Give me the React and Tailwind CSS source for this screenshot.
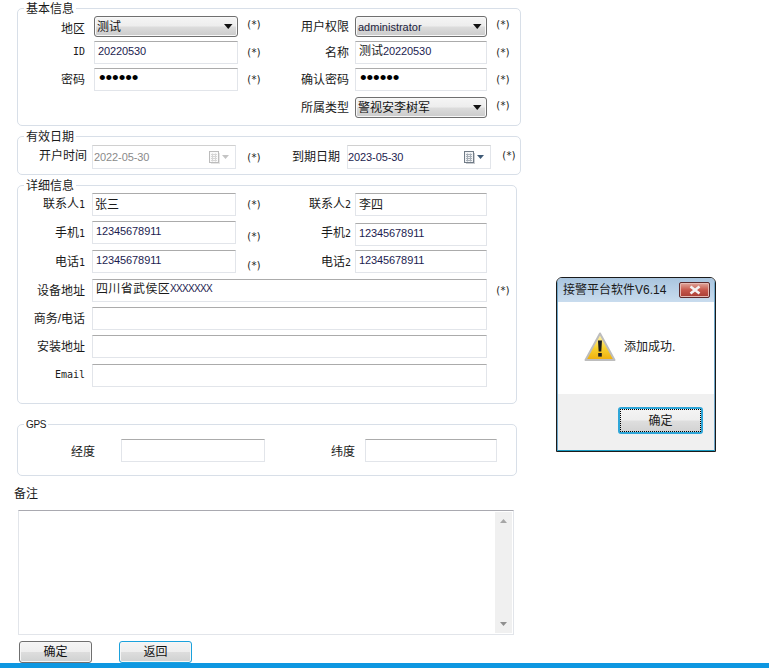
function Req({ cls = "" }) {
  return <span className={"w-[14px] shrink-0 whitespace-nowrap text-center font-['DejaVu_Sans_Mono',monospace] text-[10px] leading-[12px] tracking-[-1.1px] text-[#222] " + cls}>(*)</span>;
}
function Lbl({ w, cls = "", children }) {
  return <span className={"shrink-0 text-right text-[12px] leading-[14px] text-[#1a1a1a] " + w + " " + cls}>{children}</span>;
}
function M({ children }) {
  return <span className="font-['DejaVu_Sans_Mono',monospace] text-[10px]">{children}</span>;
}
function Box({ w, mt = "", cjk, children }) {
  return (
    <div className={"h-[23px] shrink-0 flex items-center border border-[#e2e5ea] border-t-[#ababab] bg-white pl-[3px] pr-[2px] pb-[3px] leading-[14px] text-[#1a1a1a] " + w + " " + mt + " " + (cjk ? "text-[12px]" : "text-[11px] tracking-[-0.1px] text-[#1c1c50]")}>
      {children}
    </div>
  );
}
function Dots() {
  return <span className="pl-[1px] font-['Liberation_Sans',sans-serif] text-[19px] leading-[14px] text-black">••••••</span>;
}
function Sel({ w, cjk, children }) {
  return (
    <div className={"h-[21px] shrink-0 flex items-center justify-between rounded-[3px] border border-[#6f6f6f] bg-[linear-gradient(#f5f5f5_0%,#ededed_48%,#dcdcdc_52%,#cbcbcb_100%)] pl-[2px] pr-[4px] leading-[14px] shadow-[inset_0_0_0_1px_#f8f8f8] " + w + " " + (cjk ? "text-[12px] text-[#111]" : "text-[11px] text-[#1c1c3c]")}>
      <span>{children}</span>
      <svg width="9" height="5" viewBox="0 0 9 5"><path d="M0 0h8.5L4.25 5z" fill="#111" /></svg>
    </div>
  );
}
function Cal({ dim }) {
  const c = dim ? "#bcbcbc" : "#717c87";
  return (
    <svg width="20" height="13" viewBox="0 0 20 13" className="shrink-0">
      <rect x="2" y="2" width="9" height="11" fill={dim ? "#e6e6e6" : "#c9ccd0"} />
      <rect x="0.5" y="0.5" width="9" height="11" fill={dim ? "#fafafa" : "#f2f3f5"} stroke={c} />
      <path d="M2 3.5h6M2 5.5h6M2 7.5h6M2 9.5h6" stroke={dim ? "#d6d6d6" : "#a7afb7"} strokeWidth="1" />
      <path d="M3.5 2.5v8M6.5 2.5v8" stroke={dim ? "#d6d6d6" : "#a7afb7"} strokeWidth="1" />
      <path d="M13 4h7l-3.5 4z" fill={dim ? "#c4c4c4" : "#3f5a76"} />
    </svg>
  );
}
function DateBox({ dim, children }) {
  return (
    <div className={"h-[24px] w-[144px] shrink-0 flex items-center justify-between border border-[#e2e5ea] border-t-[#d0d0d0] pr-[6px] text-[11px] tracking-[-0.1px] " + (dim ? "pl-[1px] text-[#8a8a8a]" : "text-[#1c1c50]")}>
      <span>{children}</span>
      <Cal dim={dim} />
    </div>
  );
}
function Legend({ children }) {
  return <span className="absolute left-[6px] -top-[7px] bg-white px-[2px] text-[12px] leading-[14px] text-[#1a1a1a]">{children}</span>;
}
function Btn({ blue, children }) {
  return (
    <div className={"h-[22px] w-[73px] flex items-center justify-center rounded-[3px] border bg-[linear-gradient(#f4f4f4_0%,#eeeeee_48%,#dddddd_52%,#cfd1d1_100%)] text-[12px] text-[#111] shadow-[inset_0_0_0_1px_#f6f6f6] " + (blue ? "border-[#1ba1dc]" : "border-[#6f6f6f]")}>
      {children}
    </div>
  );
}

export default function App() {
  return (
    <div className="relative flex h-[668px] w-[769px] flex-col overflow-hidden bg-white font-['Liberation_Sans','Noto_Sans_CJK_SC',sans-serif]">
      <div className="flex flex-1 flex-col pl-[17px]">
        {/* 基本信息 */}
        <section className="relative mt-[8px] h-[118px] w-[504px] rounded-[5px] border border-[#d8dfe8] pt-[7px]">
          <Legend>基本信息</Legend>
          <div className="flex items-center">
            <Lbl w="w-[67px]" cls="mr-[9px] pt-[4px]">地区</Lbl>
            <Sel w="w-[144px]" cjk>测试</Sel>
            <Req cls="ml-[8px] mb-[4px]" />
            <Lbl w="w-[89px]" cls="mr-[6px]">用户权限</Lbl>
            <Sel w="w-[132px]">administrator</Sel>
            <Req cls="ml-[8px] mb-[4px]" />
          </div>
          <div className="mt-[4px] flex items-center">
            <Lbl w="w-[67px]" cls="mr-[9px] pb-[2px]"><M>ID</M></Lbl>
            <Box w="w-[144px]">20220530</Box>
            <Req cls="ml-[8px]" />
            <Lbl w="w-[89px]" cls="mr-[6px]">名称</Lbl>
            <Box w="w-[132px]" cjk>测试<span className="text-[11px] tracking-[-0.1px] text-[#1c1c50]">20220530</span></Box>
            <Req cls="ml-[8px]" />
          </div>
          <div className="mt-[4px] flex items-center">
            <Lbl w="w-[67px]" cls="mr-[9px]">密码</Lbl>
            <Box w="w-[144px]"><Dots /></Box>
            <Req cls="ml-[8px]" />
            <Lbl w="w-[89px]" cls="mr-[6px]">确认密码</Lbl>
            <Box w="w-[132px]"><Dots /></Box>
            <Req cls="ml-[8px]" />
          </div>
          <div className="mt-[6px] flex items-center pl-[242px]">
            <Lbl w="w-[89px]" cls="mr-[6px]">所属类型</Lbl>
            <Sel w="w-[132px]" cjk>警视安李树军</Sel>
            <Req cls="ml-[8px] mb-[4px]" />
          </div>
        </section>

        {/* 有效日期 */}
        <section className="relative mt-[10px] h-[39px] w-[504px] rounded-[5px] border border-[#d8dfe8] pt-[8px]">
          <Legend>有效日期</Legend>
          <div className="flex items-center">
            <Lbl w="w-[69px]" cls="mr-[5px] pb-[2px]">开户时间</Lbl>
            <DateBox dim>2022-05-30</DateBox>
            <Req cls="ml-[10px] pt-[2px]" />
            <Lbl w="w-[80px]" cls="mr-[7px]">到期日期</Lbl>
            <DateBox>2023-05-30</DateBox>
            <Req cls="ml-[10px] mb-[2px]" />
          </div>
        </section>

        {/* 详细信息 */}
        <section className="relative mt-[10px] h-[219px] w-[500px] rounded-[5px] border border-[#d8dfe8] pt-[7px]">
          <Legend>详细信息</Legend>
          <div className="flex items-center">
            <Lbl w="w-[67px]" cls="mr-[7px]">联系人<M>1</M></Lbl>
            <Box w="w-[144px]" cjk><span className="-ml-[1px] mt-[4px]">张三</span></Box>
            <Req cls="ml-[10px]" />
            <Lbl w="w-[91px]" cls="mr-[4px]">联系人<M>2</M></Lbl>
            <Box w="w-[132px]" cjk><span className="mt-[4px]">李四</span></Box>
          </div>
          <div className="mt-[5px] flex items-start">
            <Lbl w="w-[67px]" cls="mr-[7px] mt-[5px]">手机<M>1</M></Lbl>
            <Box w="w-[144px]">12345678911</Box>
            <Req cls="ml-[10px] mt-[10px]" />
            <Lbl w="w-[91px]" cls="mr-[4px] mt-[5px]">手机<M>2</M></Lbl>
            <Box w="w-[132px]" mt="mt-[2px]">12345678911</Box>
          </div>
          <div className="mt-[4px] flex items-start">
            <Lbl w="w-[67px]" cls="mr-[7px] mt-[5px]">电话<M>1</M></Lbl>
            <Box w="w-[144px]">12345678911</Box>
            <Req cls="ml-[10px] mt-[10px]" />
            <Lbl w="w-[91px]" cls="mr-[4px] mt-[5px]">电话<M>2</M></Lbl>
            <Box w="w-[132px]">12345678911</Box>
          </div>
          <div className="mt-[6px] flex items-center">
            <Lbl w="w-[67px]" cls="mr-[7px]">设备地址</Lbl>
            <Box w="w-[395px]" cjk><span className="tracking-[0.35px]">四川省武侯区</span><span className="text-[10px] tracking-[-0.67px] text-[#1c1c50]">XXXXXXX</span></Box>
            <Req cls="ml-[8px]" />
          </div>
          <div className="mt-[5px] flex items-center">
            <Lbl w="w-[67px]" cls="mr-[7px]">商务/电话</Lbl>
            <Box w="w-[395px]" />
          </div>
          <div className="mt-[5px] flex items-center">
            <Lbl w="w-[67px]" cls="mr-[7px]">安装地址</Lbl>
            <Box w="w-[395px]" />
          </div>
          <div className="mt-[6px] flex items-center">
            <Lbl w="w-[67px]" cls="mr-[7px] pb-[3px]"><M>Email</M></Lbl>
            <Box w="w-[395px]" />
          </div>
        </section>

        {/* GPS */}
        <section className="relative mt-[20px] h-[52px] w-[500px] rounded-[5px] border border-[#d8dfe8] pt-[14px]">
          <span className="absolute left-[6px] -top-[7px] bg-white px-[2px] text-[10px] leading-[14px] tracking-[-0.3px] text-[#1a1a1a]">GPS</span>
          <div className="flex items-center">
            <Lbl w="w-[77px]" cls="mr-[26px] pt-[2px]">经度</Lbl>
            <Box w="w-[144px]" />
            <Lbl w="w-[90px]" cls="mr-[10px] pt-[2px]">纬度</Lbl>
            <Box w="w-[132px]" />
          </div>
        </section>

        <div className="-ml-[3px] mt-[11px] h-[14px] text-[12px] leading-[14px] text-[#1a1a1a]">备注</div>

        <div className="ml-[1px] mt-[9px] flex h-[125px] w-[496px] justify-end border border-[#e2e5ea] border-t-[#a9a9b0] bg-white py-[1px] pr-[1px]">
          <div className="flex w-[17px] flex-col items-center justify-between bg-[#f0f0f0] py-[7px]">
            <svg width="7" height="4" viewBox="0 0 7 4"><path d="M3.5 0L7 4H0z" fill="#a6a6a6" /></svg>
            <svg width="7" height="4" viewBox="0 0 7 4"><path d="M0 0h7L3.5 4z" fill="#8f8f8f" /></svg>
          </div>
        </div>

        <div className="ml-[2px] mt-[6px] flex gap-[27px]">
          <Btn>确定</Btn>
          <Btn blue>返回</Btn>
        </div>
      </div>
      <div className="h-[5px] w-full shrink-0 bg-[#0e97e1]" />

      {/* 消息框 */}
      <div className="absolute left-[556px] top-[277px] flex h-[175px] w-[160px] flex-col overflow-hidden rounded-t-[6px] border border-[#1b1b1b] bg-white">
        <div className="flex flex-1 flex-col border-b border-x border-x-[#6fa7c9] border-b-[#1a9ac0]">
          <div className="flex h-[24px] shrink-0 items-center justify-between bg-gradient-to-b from-[#a9c5df] to-[#c9dcee] pl-[5px] pr-[4px] text-[12px] text-[#1a1a1a]">
            <span>接警平台软件V6.14</span>
            <div className="flex h-[16px] w-[31px] items-center justify-center rounded-[2px] border border-[#5b2a2c] bg-gradient-to-b from-[#dfa79d] via-[#c6574b] to-[#a93d34] shadow-[inset_0_0_0_1px_#e6b9b2]">
              <svg width="14" height="10" viewBox="0 0 14 10"><path d="M2.5 1.5l9 7M11.5 1.5l-9 7" stroke="#f4f4f4" strokeWidth="2.6" /></svg>
            </div>
          </div>
          <div className="flex flex-1 items-center bg-white pb-[3px] pl-[26px]">
            <svg width="32" height="30" viewBox="0 0 32 30" className="shrink-0">
              <defs>
                <linearGradient id="warn" x1="0" y1="0" x2="0" y2="1">
                  <stop offset="0" stopColor="#fff6c0" />
                  <stop offset="0.55" stopColor="#f8d230" />
                  <stop offset="1" stopColor="#efae0c" />
                </linearGradient>
              </defs>
              <path d="M16 1.5L30.5 28H1.5z" fill="url(#warn)" stroke="#bdbdbd" strokeWidth="2" strokeLinejoin="round" />
              <path d="M14 8.5h4l-.7 11h-2.6z" fill="#1b1b1b" />
              <rect x="14.2" y="21" width="3.6" height="3.6" fill="#1b1b1b" />
            </svg>
            <span className="ml-[8px] text-[12px] text-[#1a1a1a]">添加成功.</span>
          </div>
          <div className="flex h-[56px] shrink-0 justify-end bg-[#f0f0f0] pr-[11px] pt-[13px]">
            <div className="h-[27px] w-[85px] rounded-[3px] border-2 border-[#2fa6d8] bg-[linear-gradient(#f4f4f4_0%,#eeeeee_48%,#dedede_52%,#d2d2d2_100%)]">
              <div className="flex h-full w-full items-center justify-center border border-dotted border-black text-[12px] text-[#1a1a1a]">确定</div>
            </div>
          </div>
        </div>
      </div>
    </div>
  );
}
